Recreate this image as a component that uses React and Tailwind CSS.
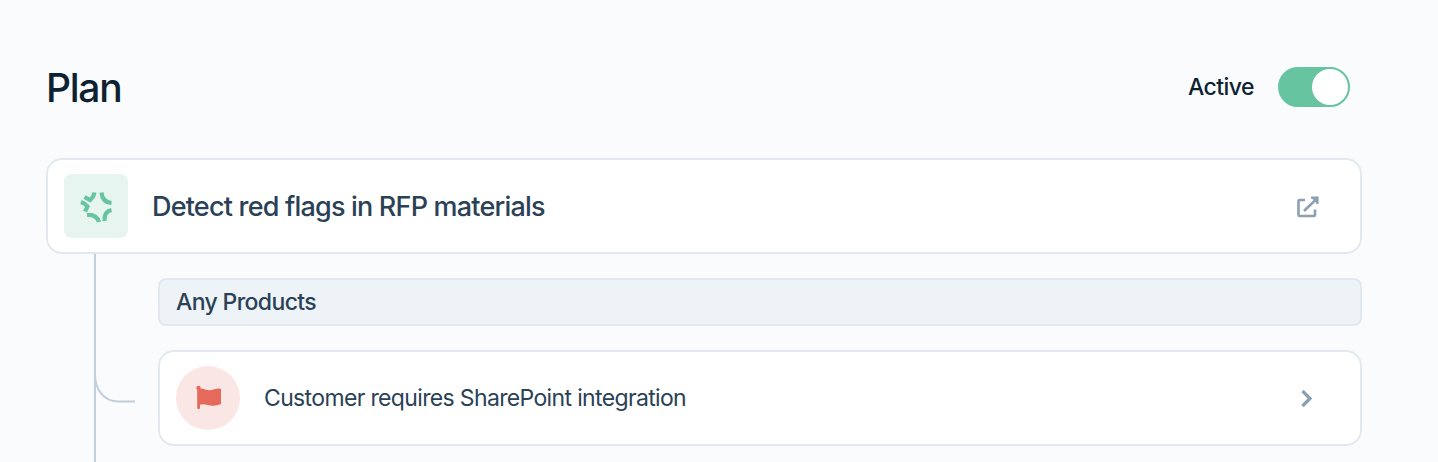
export default function App() {
  return (
    <div className="h-[462px] overflow-hidden bg-[#f9fbfd] pl-[46px] pr-[76px] pt-[67px]" style={{ fontFamily: 'Inter, "Liberation Sans", sans-serif' }}>
      <div className="flex h-[40px] items-center justify-between">
        <h1 className="pt-[2px] text-[39px] font-medium leading-[44px] tracking-[-1.25px] text-[#0d2231]">Plan</h1>
        <div className="mr-[12px] flex items-center gap-[24px]">
          <span className="text-[23px] font-medium tracking-[-0.55px] text-[#0d2231]">Active</span>
          <div className="flex h-[40px] w-[72px] items-center justify-end rounded-full border-2 border-[#66c5a0] bg-[#66c5a0]">
            <div className="h-[36px] w-[36px] rounded-full bg-white" />
          </div>
        </div>
      </div>

      <div className="mt-[51px] flex h-[96px] items-center rounded-[16px] border-2 border-[#e2e8ef] bg-white pl-[16px] pr-[40px]">
        <div className="flex h-[64px] w-[64px] shrink-0 items-center justify-center rounded-[8px] bg-[#e7f5f0]">
          <svg width="50" height="50" viewBox="0 0 50 50" fill="none" stroke="#66c5a0" strokeWidth="4.2">
            <path d="M13.5 16 L19 19 C21.5 17 23 14.5 23.5 11.5" />
            <path d="M30.5 11.5 C31 17.5 34.5 21.5 40.5 22" />
            <path d="M40.5 29 C35.5 30 33 34 33.5 40" />
            <path d="M28 41 C26.5 36 22 33.5 16 34" />
            <path d="M14 30.5 L16.5 25.5 C15 23.5 13 22 10 21" />
          </svg>
        </div>
        <div className="ml-[24px] flex-1 pt-[2px] text-[27px] font-medium tracking-[-0.8px] text-[#2a4156]">Detect red flags in RFP materials</div>
        <svg width="24" height="24" viewBox="0 0 24 24" fill="none" stroke="#8ba0b2" strokeWidth="2.6">
          <path d="M9 6 H3.5 A1 1 0 0 0 2.5 7 V21 A1 1 0 0 0 3.5 22 H18 A1 1 0 0 0 19 21 V15.5" />
          <path d="M8 17 L19 6.5" />
          <path d="M15 3.6 H21.5 V10" strokeWidth="2.2" fill="#8ba0b2" />
        </svg>
      </div>

      <div className="relative pl-[112px] pt-[24px]">
        <div className="absolute left-[48px] top-0 h-[220px] w-[2px] bg-[#c1cfda]" />
        <svg className="absolute left-[48px] top-[120px]" width="44" height="32" fill="none" stroke="#c1cfda" strokeWidth="2">
          <path d="M1 0 C1 16 10 27 24 27.5 H41" />
        </svg>
        <div className="flex h-[48px] items-center rounded-[8px] border-2 border-[#e2e8ef] bg-[#eef3f7] pl-[16px] text-[23px] font-medium tracking-[-0.63px] text-[#2a4156]">Any Products</div>
        <div className="mt-[24px] flex h-[96px] items-center rounded-[16px] border-2 border-[#e2e8ef] bg-white pl-[16px] pr-[46px]">
          <div className="flex h-[64px] w-[64px] shrink-0 items-center justify-center rounded-full bg-[#fae6e4]">
            <svg width="50" height="50" viewBox="0 0 50 50" fill="#e66a5b">
              <circle cx="15.5" cy="15" r="2.2" />
              <rect x="14.2" y="15" width="2.8" height="21" rx="1" />
              <path d="M16 15.5 C21 14.8 24 18 28.5 17 C32 16.2 35 15 38 16 V31 C34 32.5 31 33 28 32.5 C24 32 20 30 16 32 Z" />
            </svg>
          </div>
          <div className="ml-[24px] flex-1 text-[23px] tracking-[-0.65px] text-[#2a4156]">Customer requires SharePoint integration</div>
          <svg width="14" height="20" viewBox="0 0 14 20" fill="none" stroke="#8ba0b2" strokeWidth="3.2">
            <path d="M2.5 3 L10 10.5 L2.5 18" />
          </svg>
        </div>
      </div>
    </div>
  );
}
